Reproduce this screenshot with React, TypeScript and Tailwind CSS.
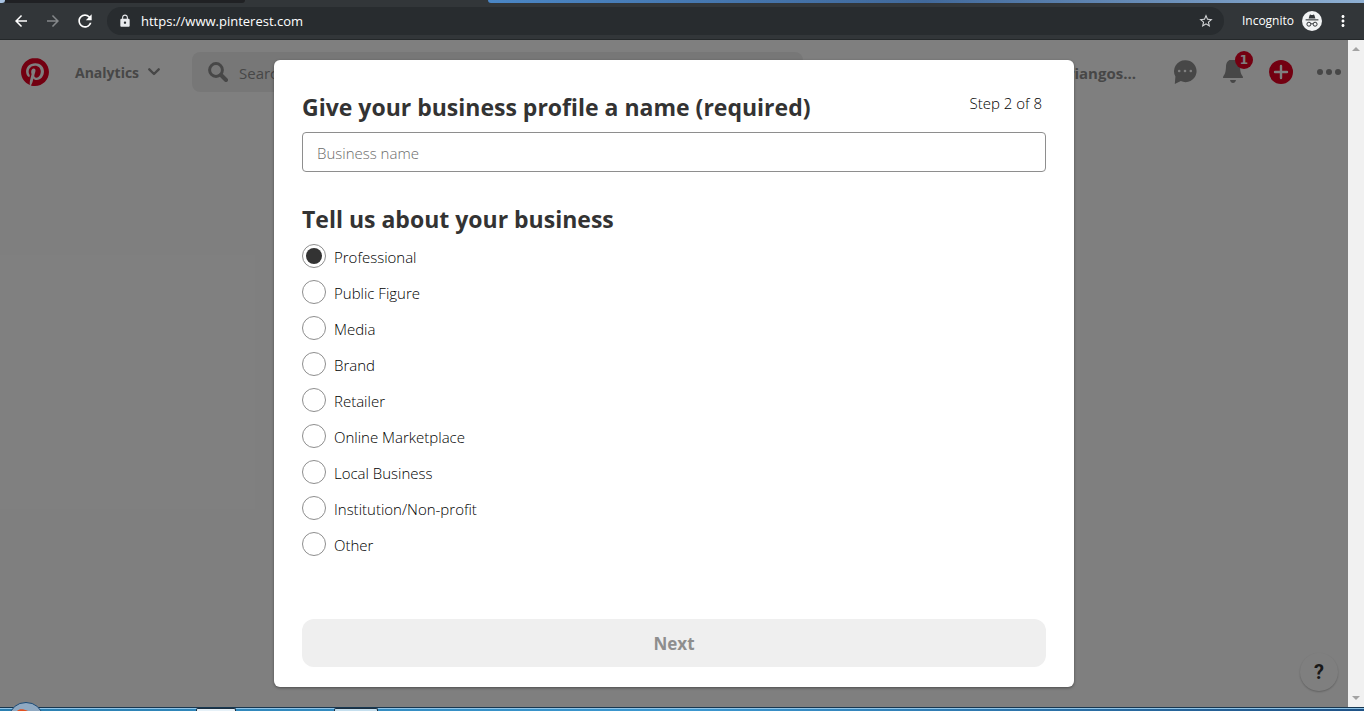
import { useState } from "react";
import {
  MdArrowBack,
  MdArrowForward,
  MdRefresh,
  MdLock,
  MdStarBorder,
  MdMoreVert,
} from "react-icons/md";

const businessTypes = [
  "Professional",
  "Public Figure",
  "Media",
  "Brand",
  "Retailer",
  "Online Marketplace",
  "Local Business",
  "Institution/Non-profit",
  "Other",
];

function IncognitoIcon() {
  return (
    <svg viewBox="0 0 20 20" className="size-5" aria-hidden="true">
      <circle cx="10" cy="10" r="10" fill="#f1f3f4" />
      <path d="M6.6 7.6 7.6 4.2c.2-.6.6-.7 1.100-.5.900.3 1.700.3 2.600 0 .5-.2.900-.1 1.100.5l1 3.400z" fill="#323639" />
      <path d="M3.600 8.300h12.800v1.100H3.600z" fill="#323639" />
      <g fill="none" stroke="#323639" strokeWidth="1">
        <circle cx="6.900" cy="13.200" r="2" />
        <circle cx="13.100" cy="13.200" r="2" />
        <path d="M8.900 13c.6-.5 1.600-.5 2.200 0" />
      </g>
    </svg>
  );
}

function BrowserBar() {
  return (
    <div className="shrink-0 bg-[#323639]">
      <div className="flex h-[3px] bg-[#323639]">
        <div className="w-[5px] rounded-br bg-[#a9c4e4]" />
        <div className="w-60 rounded-br bg-[#202124]" />
        <div className="w-[243px]" />
        <div className="flex-1 rounded-bl bg-linear-to-r from-[#4a86c5] via-[#41699b] to-[#8fb0d3]" />
      </div>
      <div className="flex h-[37px] items-center border-b border-[#24282a] px-3 text-white">
        <button aria-label="Back" className="mr-[14px]">
          <MdArrowBack className="size-[18px]" />
        </button>
        <button aria-label="Forward" className="mr-[13px] text-[#85888a]">
          <MdArrowForward className="size-[18px]" />
        </button>
        <button aria-label="Reload" className="mr-3">
          <MdRefresh className="size-5" />
        </button>
        <div className="flex h-7 flex-1 items-center rounded-full bg-[#282c2f] pr-[10px] pl-[11px]">
          <MdLock className="mr-[9px] size-[14px] text-[#e8eaed]" />
          <input
            aria-label="Address"
            defaultValue="https://www.pinterest.com"
            className="min-w-0 flex-1 bg-transparent pt-px text-[13px] outline-none"
          />
          <button aria-label="Bookmark this page" className="text-[#d5d7d9]">
            <MdStarBorder className="size-4" />
          </button>
        </div>
        <span className="mr-2 ml-[18px] text-xs">Incognito</span>
        <IncognitoIcon />
        <button aria-label="Browser menu" className="ml-3">
          <MdMoreVert className="size-[18px]" />
        </button>
      </div>
    </div>
  );
}

function SiteHeader() {
  return (
    <header className="flex h-16 items-center pl-[21px] text-[#8e8e8e]">
      <a href="#home" aria-label="Home">
        <svg viewBox="0 0 24 24" className="size-7" fill="#e60023">
          <path d="M12.017 0C5.396 0 .029 5.367.029 11.987c0 5.079 3.158 9.417 7.618 11.162-.105-.949-.199-2.403.041-3.439.219-.937 1.406-5.957 1.406-5.957s-.359-.72-.359-1.781c0-1.663.967-2.911 2.168-2.911 1.024 0 1.518.769 1.518 1.688 0 1.029-.653 2.567-.992 3.992-.285 1.193.6 2.165 1.775 2.165 2.128 0 3.768-2.245 3.768-5.487 0-2.861-2.063-4.869-5.008-4.869-3.41 0-5.409 2.562-5.409 5.199 0 1.033.394 2.143.889 2.741.099.12.112.225.085.345-.09.375-.293 1.199-.334 1.363-.053.225-.172.271-.401.165-1.495-.69-2.433-2.878-2.433-4.646 0-3.776 2.748-7.252 7.92-7.252 4.158 0 7.392 2.967 7.392 6.923 0 4.135-2.607 7.462-6.233 7.462-1.214 0-2.354-.629-2.758-1.379l-.749 2.848c-.269 1.045-1.004 2.352-1.498 3.146 1.123.345 2.306.535 3.55.535 6.607 0 11.985-5.365 11.985-11.987C23.97 5.39 18.592.026 11.985.026z" />
        </svg>
      </a>
      <button className="ml-[26px] flex w-[85px] items-center justify-between text-sm font-bold">
        <span className="pt-0.5">Analytics</span>
        <svg viewBox="0 0 12 8" className="w-3" fill="none" stroke="currentColor" strokeWidth="2.400" strokeLinecap="round" strokeLinejoin="round">
          <path d="M1.300 1.300 6 6l4.700-4.700" />
        </svg>
      </button>
      <label className="ml-8 flex h-10 flex-1 items-center rounded-lg bg-[#efefef] pl-4">
        <svg viewBox="0 0 20 20" className="size-5 shrink-0" fill="none" stroke="currentColor">
          <circle cx="8" cy="8" r="6.400" strokeWidth="3" />
          <path d="m13 13 5 5" strokeWidth="4" strokeLinecap="round" />
        </svg>
        <input
          aria-label="Search"
          placeholder="Search"
          className="ml-[11px] min-w-0 flex-1 bg-transparent pt-0.5 text-[15px] outline-none placeholder:text-[#8e8e8e]"
        />
      </label>
      <nav className="flex w-[545px] items-center justify-end pr-[7px]">
        <a href="#profile" className="pt-0.5 text-[15px] font-bold">riangos...</a>
        <button aria-label="Messages" className="ml-[37px]">
          <svg viewBox="0 0 24 24" className="size-6">
            <path d="M12 .200a11 11 0 0 0-9.600 16.400L1.800 24l6-2.900A11 11 0 1 0 12 .2z" fill="currentColor" />
            <g fill="#fff">
              <circle cx="6.200" cy="11" r="1.300" />
              <circle cx="12" cy="11" r="1.300" />
              <circle cx="17.800" cy="11" r="1.300" />
            </g>
          </svg>
        </button>
        <button aria-label="Notifications" className="relative ml-6">
          <svg viewBox="0 0 24 24" className="size-6" fill="currentColor">
            <path d="M12-.8C8-.8 5.200 1.800 5 6c-.2 5-.6 7.500-2.700 10.300L2 18h20l-.3-1.700C19.600 13.500 19.200 11 19 6c-.2-4.200-3-6.800-7-6.800zM9 20h6c-.4 2-1.500 3-3 3s-2.600-1-3-3z" />
          </svg>
          <span className="absolute -top-[9px] -right-2 flex size-[18px] items-center justify-center rounded-full bg-[#e60023] font-['DejaVu_Sans',sans-serif] text-xs font-bold text-white">
            1
          </span>
        </button>
        <button aria-label="Create" className="ml-6">
          <svg viewBox="0 0 24 24" className="size-6">
            <circle cx="12" cy="12" r="12" fill="#e60023" />
            <path d="M12 6v12M6 12h12" stroke="#fff" strokeWidth="2.400" strokeLinecap="round" />
          </svg>
        </button>
        <button aria-label="More options" className="ml-6">
          <svg viewBox="0 0 24 24" className="size-6" fill="currentColor">
            <circle cx="3" cy="12" r="3" />
            <circle cx="12" cy="12" r="3" />
            <circle cx="21" cy="12" r="3" />
          </svg>
        </button>
      </nav>
    </header>
  );
}

function BusinessDialog() {
  const [type, setType] = useState("Professional");
  return (
    <form
      role="dialog"
      aria-label="Business profile"
      className="flex w-[800px] max-w-full flex-col rounded-md bg-white px-7 pt-[31px] pb-5 text-[#333] shadow-[0_1px_3px_rgba(0,0,0,0.4)]"
    >
      <div className="flex items-start justify-between pr-1">
        <label htmlFor="business-name" className="text-[23px] leading-8 font-bold">
          Give your business profile a name (required)
        </label>
        <span className="text-[15px] leading-6 font-light text-black">Step 2 of 8</span>
      </div>
      <input
        id="business-name"
        placeholder="Business name"
        className="mt-[9px] h-10 rounded border border-[#8e8e8e] px-[14px] pt-px text-[15px] font-light outline-none placeholder:text-[#6b6b6b]"
      />
      <fieldset className="mt-[31px]">
        <legend className="text-[23px] leading-8 font-bold">Tell us about your business</legend>
        <div className="mt-[9px] flex flex-col gap-3">
          {businessTypes.map((name) => (
            <label key={name} className="flex h-6 items-center gap-2 text-[15px] font-light text-black">
              <input
                type="radio"
                name="business-type"
                checked={type === name}
                onChange={() => setType(name)}
                className="size-6 appearance-none rounded-full border border-[#8e8e8e] bg-white bg-clip-content p-[3px] checked:bg-[#333]"
              />
              <span className="pt-0.5">{name}</span>
            </label>
          ))}
        </div>
      </fieldset>
      <button type="button" disabled className="mt-auto h-12 shrink-0 rounded-xl bg-[#efefef] pt-0.5 text-[17px] font-bold text-[#8e8e8e]">
        Next
      </button>
    </form>
  );
}

function Scrollbar() {
  return (
    <div className="flex w-4 shrink-0 flex-col items-center justify-between bg-[#f1f1f1] py-[7px]">
      <svg viewBox="0 0 8 4" className="w-2" fill="#a3a3a3">
        <path d="M0 4 4 0l4 4z" />
      </svg>
      <svg viewBox="0 0 8 4" className="w-2" fill="#a3a3a3">
        <path d="M0 0h8L4 4z" />
      </svg>
    </div>
  );
}

function Taskbar() {
  return (
    <div className="relative h-1 shrink-0 border-t border-[#17364f] bg-linear-to-r from-[#2a7fb0] via-[#3c98d0] to-[#1f5286]">
      <div className="h-px bg-[#8fc3e6]" />
      <svg viewBox="0 0 32 9" className="absolute bottom-0 left-[10px] h-[9px] w-8">
        <ellipse cx="16" cy="14" rx="16" ry="13.500" fill="#8fa9c2" stroke="#1c4a75" />
        <path d="M7 9c2-2.500 6-2.500 11 0z" fill="#e2501f" />
      </svg>
      <div className="absolute bottom-0 left-[196px] h-[3px] w-10 rounded-t-xs border border-b-0 border-[#1b2f40] bg-[#e6f1f8]" />
      <div className="absolute bottom-0 left-[334px] h-[3px] w-11 rounded-t-xs border border-b-0 border-[#1b2f40] bg-[#c5dfee]" />
    </div>
  );
}

export default function App() {
  return (
    <div className="flex min-h-screen flex-col font-['Open_Sans','Noto_Sans',sans-serif]">
      <BrowserBar />
      <div className="flex flex-1">
        <main className="relative flex flex-1 flex-col bg-white">
          <SiteHeader />
          <button
            aria-label="Help"
            className="mt-auto mr-[10px] mb-4 flex size-[38px] items-center justify-center self-end rounded-full bg-white font-['Roboto',sans-serif] text-xl font-bold text-[#333] shadow-[0_1px_2px_rgba(0,0,0,0.25)]"
          >
            ?
          </button>
          <div className="absolute inset-0 flex justify-center bg-black/50 py-5">
            <BusinessDialog />
          </div>
        </main>
        <Scrollbar />
      </div>
      <Taskbar />
    </div>
  );
}
